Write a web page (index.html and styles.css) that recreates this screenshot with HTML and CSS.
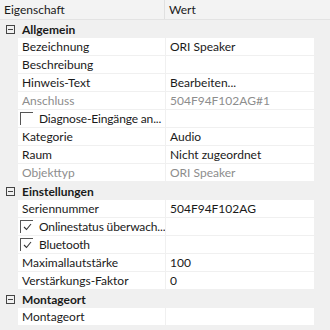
FILE: index.html
```html
<!DOCTYPE html>
<html lang="de">
<head>
    <meta charset="UTF-8">
    <title>Eigenschaften</title>
    <link rel="stylesheet" href="styles.css">
</head>
<body>
    <div class="grid">
        <div class="head">
            <div class="head-name">Eigenschaft</div>
            <div class="head-value">Wert</div>
        </div>

        <!-- Allgemein -->
        <div class="cat">
            <span class="toggle"></span>
            <span class="cat-label">Allgemein</span>
        </div>
        <div class="row">
            <div class="name">Bezeichnung</div>
            <div class="value">ORI Speaker</div>
        </div>
        <div class="row">
            <div class="name">Beschreibung</div>
            <div class="value"></div>
        </div>
        <div class="row">
            <div class="name">Hinweis-Text</div>
            <div class="value">Bearbeiten...</div>
        </div>
        <div class="row disabled">
            <div class="name">Anschluss</div>
            <div class="value">504F94F102AG#1</div>
        </div>
        <div class="row">
            <div class="name check"><span class="box"></span><span class="check-label">Diagnose-Eingänge an...</span></div>
            <div class="value"></div>
        </div>
        <div class="row">
            <div class="name">Kategorie</div>
            <div class="value">Audio</div>
        </div>
        <div class="row">
            <div class="name">Raum</div>
            <div class="value">Nicht zugeordnet</div>
        </div>
        <div class="row disabled">
            <div class="name">Objekttyp</div>
            <div class="value">ORI Speaker</div>
        </div>

        <!-- Einstellungen -->
        <div class="cat">
            <span class="toggle"></span>
            <span class="cat-label">Einstellungen</span>
        </div>
        <div class="row">
            <div class="name">Seriennummer</div>
            <div class="value">504F94F102AG</div>
        </div>
        <div class="row">
            <div class="name check"><span class="box"><svg width="9" height="8" viewBox="0 0 9 8"><path d="M1 4 L3.5 6.5 L8 1" fill="none" stroke="#333" stroke-width="1.1"/></svg></span><span class="check-label">Onlinestatus überwach...</span></div>
            <div class="value"></div>
        </div>
        <div class="row">
            <div class="name check"><span class="box"><svg width="9" height="8" viewBox="0 0 9 8"><path d="M1 4 L3.5 6.5 L8 1" fill="none" stroke="#333" stroke-width="1.1"/></svg></span><span class="check-label">Bluetooth</span></div>
            <div class="value"></div>
        </div>
        <div class="row">
            <div class="name">Maximallautstärke</div>
            <div class="value">100</div>
        </div>
        <div class="row">
            <div class="name">Verstärkungs-Faktor</div>
            <div class="value">0</div>
        </div>

        <!-- Montageort -->
        <div class="cat">
            <span class="toggle"></span>
            <span class="cat-label">Montageort</span>
        </div>
        <div class="row">
            <div class="name">Montageort</div>
            <div class="value"></div>
        </div>
    </div>
</body>
</html>
```

FILE: styles.css
```css
/* Page */
body {
    margin: 0;
    background-color: #f0f0f0;
    font-family: 'Lato', sans-serif;
    font-size: 12px;
    color: #1a1a1a;
}

.grid {
    width: 330px;
    height: 330px;
    overflow: hidden;
}

/* Header */
.head {
    display: flex;
    height: 20px;
    line-height: 19px;
    background-color: #f3f3f3;
    border-bottom: 1px solid #e3e3e3;
    box-sizing: border-box;
}

.head-name {
    width: 160px;
    padding-left: 4px;
    border-right: 1px solid #e0e0e0;
}

.head-value {
    padding-left: 4px;
}

/* Category rows */
.cat {
    display: flex;
    align-items: center;
    height: 18px;
}

.toggle {
    flex-shrink: 0;
    width: 9px;
    height: 9px;
    margin: 0 7px 0 6px;
    border: 1px solid #444;
    box-sizing: border-box;
    position: relative;
}

.toggle::after {
    content: "";
    position: absolute;
    left: 1px;
    top: 3px;
    width: 5px;
    height: 1px;
    background: #444;
}

.cat-label {
    font-weight: bold;
}

/* Property rows */
.row {
    display: flex;
    height: 17px;
    line-height: 17px;
    margin-bottom: 1px;
    padding-left: 18px;
}

.name,
.value {
    background-color: #ffffff;
    white-space: nowrap;
    overflow: hidden;
}

.name {
    width: 143px;
    padding-left: 4px;
    margin-right: 1px;
}

.value {
    width: 144px;
    padding-left: 4px;
}

.disabled .name,
.disabled .value {
    color: #8d8d8d;
}

/* Checkbox rows */
.check {
    display: flex;
    align-items: center;
}

.check-label {
    letter-spacing: -0.15px;
}

.box {
    flex-shrink: 0;
    width: 13px;
    height: 13px;
    margin: 0 6px 0 -2px;
    border-left: 1px solid #555;
    border-top: 1px solid #555;
    box-sizing: border-box;
    display: flex;
    align-items: center;
    justify-content: center;
}
```
